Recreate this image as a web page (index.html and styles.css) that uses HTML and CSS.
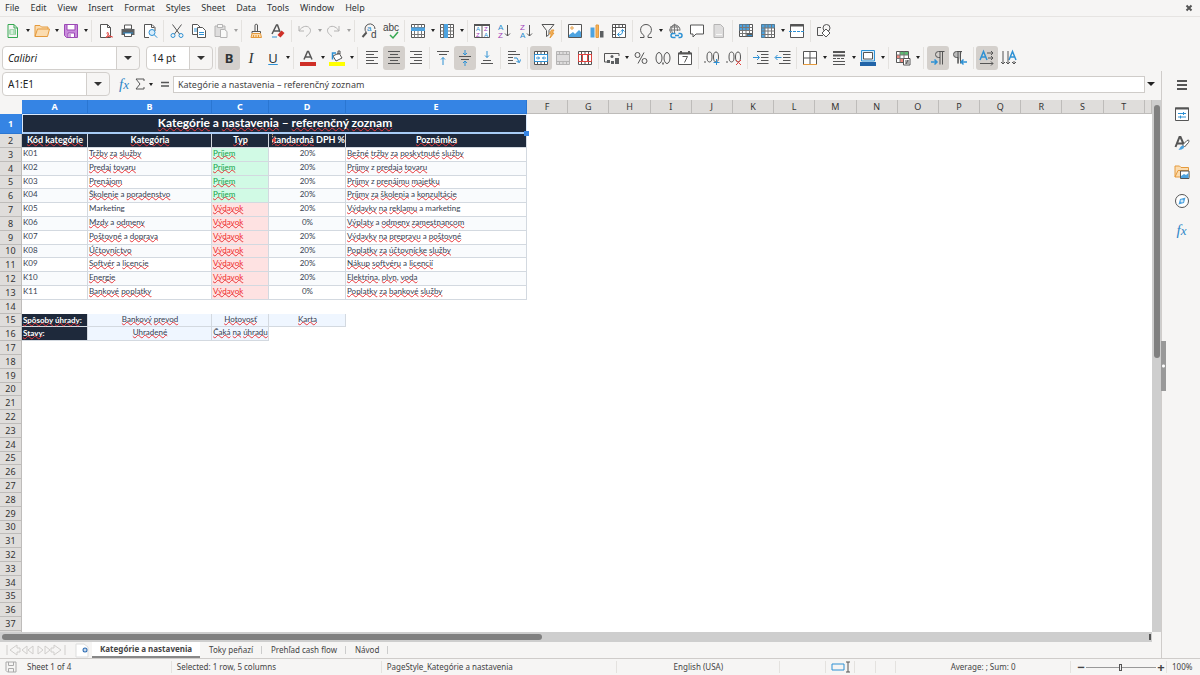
FILE: index.html
```html
<!DOCTYPE html>
<html lang="sk">
<head>
<meta charset="utf-8">
<title>Kategórie a nastavenia</title>
<link rel="stylesheet" href="styles.css">
</head>
<body>
<div class="app">
<nav class="menubar">
<button>File</button><button>Edit</button><button>View</button><button>Insert</button><button>Format</button><button>Styles</button><button>Sheet</button><button>Data</button><button>Tools</button><button>Window</button><button>Help</button>
<button class="close" aria-label="Close"><svg viewBox="0 0 8 8"><path d="M1.500 1.500l5 5M6.500 1.500l-5 5"/></svg></button>
</nav>

<div class="toolbar">
<button class="tool" aria-label="New"><svg viewBox="0 0 16 16"><path class="green" d="M3 1.500h6l3.500 3.500v9.500H3z"/><path class="green" d="M9 1.500V5h3.500"/><path class="greenfill" d="M4.500 6.500h6.500v5H4.500z"/><path class="white" d="M5 8h5.500M5 10h5.500M7 7v4"/></svg></button><button class="drop" aria-label="New menu"></button>
<button class="tool" aria-label="Open"><svg viewBox="0 0 16 16"><path class="orange tan" d="M1 13.500V2.500h5l1.500 1.500H14V6M1 13.500L3.500 6h12l-2 7.500z"/></svg></button><button class="drop" aria-label="Open menu"></button>
<button class="tool" aria-label="Save"><svg viewBox="0 0 16 16"><path class="purple purplefill" d="M1.500 1.500h13v13h-11l-2-2z"/><path class="purple whitefill" d="M4 1.500h8V7H4zM5 10h6.500v4.500H5z"/><path class="purple" d="M7 11v3"/></svg></button><button class="drop" aria-label="Save menu"></button>
<i class="sep wide"></i>
<button class="tool" aria-label="Export PDF"><svg viewBox="0 0 16 16"><path class="whitefill" d="M2.500 1.500h7l3 3v10h-10z"/><path d="M9.500 1.500v3h3"/><path class="red" d="M8 14.500c3-3 3-5 1.500-5s0 3 5 4.500c-2-1-4-1-6.500.5z"/></svg></button>
<button class="tool" aria-label="Print"><svg viewBox="0 0 16 16"><path class="whitefill" d="M4.500 2h7v4h-7z"/><path class="darkfill" d="M1.500 6h13v6h-13z"/><path class="whitefill" d="M4.500 9.500h7v4h-7z"/><path class="blue" d="M3 10h10"/></svg></button>
<button class="tool" aria-label="Print preview"><svg viewBox="0 0 16 16"><path class="whitefill" d="M13 8V4.500l-3-3H2.500v13H7"/><path d="M9.500 1.500v3h3"/><circle class="blue palefill" cx="10" cy="9.500" r="3"/><path class="blue" d="M12.200 11.700l3 3"/></svg></button>
<i class="sep"></i>
<button class="tool" aria-label="Cut"><svg viewBox="0 0 16 16"><path d="M3.500 1.500l7 9.500M12.500 1.500l-7 9.500"/><circle class="blue" cx="4" cy="12.500" r="2"/><circle class="blue" cx="12" cy="12.500" r="2"/></svg></button>
<button class="tool" aria-label="Copy"><svg viewBox="0 0 16 16"><path class="whitefill" d="M1.500 1.500h5l3 3v7h-8z"/><path class="blue" d="M3 6h5M3 8h5"/><path class="whitefill" d="M6.500 4.500h5l3 3v7h-8z"/><path class="blue" d="M8 9.500h5M8 11.500h5"/></svg></button>
<button class="tool dim" aria-label="Paste"><svg viewBox="0 0 16 16"><path class="clipfill" d="M2 3h10v10.500H2z"/><path class="whitefill" d="M4.500 1.500h5v3h-5zM7.500 6.500h4l2.500 2v6H7.500z"/></svg></button><button class="drop dim" aria-label="Paste menu"></button>
<i class="sep wide"></i>
<button class="tool" aria-label="Clone formatting"><svg viewBox="0 0 16 16"><path d="M7 8V2c0-1 2.500-1 2.500 0v6M4 8.500h8.500v2H4z"/><path class="orange tan" d="M4 10.500h8.500l1 4H3z"/><path class="orange" d="M5.500 14v-2M8 14v-2M10.500 14v-2"/></svg></button>
<button class="tool" aria-label="Clear formatting"><svg viewBox="0 0 16 16"><path class="bold" d="M2 11L6.500 2h1L10 9M3.500 8H9"/><path class="blue" d="M2 14h5"/><path class="redfill" d="M7.500 12l4-4.500 3 2.500-4 4.500z"/></svg></button>
<i class="sep"></i>
<button class="tool dim" aria-label="Undo"><svg viewBox="0 0 16 16"><path d="M2 3v5h5M2 8c3-5 8-6 10.500-3s0 6-3.500 8.500"/></svg></button><button class="drop dim" aria-label="Undo menu"></button>
<button class="tool dim" aria-label="Redo"><svg viewBox="0 0 16 16"><path d="M13 3v5H8M13 8C10 3 5 2 2.500 5s0 6 3.500 8.500"/></svg></button><button class="drop dim" aria-label="Redo menu"></button>
<i class="sep wide"></i>
<button class="tool" aria-label="Find and replace"><svg viewBox="0 0 16 16"><path d="M5.500 9.500A5 5 0 1 1 14 6"/><path class="heavy" d="M5.500 9.500L1.500 14"/><text class="tb" x="6" y="8" font-size="8">a</text><text x="10" y="15" font-size="10">d</text></svg></button>
<button class="tool" aria-label="Spelling"><svg viewBox="0 0 16 16"><text x="0" y="8" font-size="10">abc</text><path class="green bold" d="M7 12l3 3 5-6"/></svg></button>
<i class="sep"></i>
<button class="tool" aria-label="Row"><svg viewBox="0 0 16 16"><path class="whitefill" d="M1.500 1.500h13v13h-13z"/><path class="thin" d="M1.500 4.500h13M1.500 11.500h13M4.500 1.500v13M8 1.500v13M11.500 1.500v13"/><path class="bluefill" d="M1 4.500h14V8H1z"/></svg></button><button class="drop" aria-label="Row menu"></button>
<button class="tool" aria-label="Column"><svg viewBox="0 0 16 16"><path class="whitefill" d="M1.500 1.500h13v13h-13z"/><path class="thin" d="M1.500 4.500h13M1.500 8h13M1.500 11.500h13M4.500 1.500v13M11.500 1.500v13"/><path class="bluefill" d="M5 1h4v14H5z"/></svg></button><button class="drop" aria-label="Column menu"></button>
<i class="sep wide"></i>
<button class="tool" aria-label="Sort"><svg viewBox="0 0 16 16"><path class="whitefill" d="M.5 1.500h15v13H.5z"/><path class="heavy" d="M0 2h16"/><path d="M8 2v12.500"/><text class="tb" x="2" y="8" font-size="6">A</text><text class="tp" x="2" y="14" font-size="6">Z</text><text class="tp" x="10" y="8" font-size="6">Z</text><text class="tb" x="10" y="14" font-size="6">A</text></svg></button>
<button class="tool" aria-label="Sort ascending"><svg viewBox="0 0 16 16"><text class="tb" x="2" y="7" font-size="8">A</text><text class="tp" x="2" y="15" font-size="8">Z</text><path d="M11.500 2v11M9 10.500l2.500 2.500 2.500-2.500"/></svg></button>
<button class="tool" aria-label="Sort descending"><svg viewBox="0 0 16 16"><text class="tp" x="2" y="7" font-size="8">Z</text><text class="tb" x="2" y="15" font-size="8">A</text><path d="M11.500 2v11M9 10.500l2.500 2.500 2.500-2.500"/></svg></button>
<button class="tool" aria-label="AutoFilter"><svg viewBox="0 0 16 16"><path d="M2 1.500h12l-5 6v4l-2.500 2v-6z"/><path class="orange orangefill" d="M11.500 7l-2 4h2l-1.500 4 4-5h-2l2-3z"/></svg></button>
<i class="sep"></i>
<button class="tool" aria-label="Image"><svg viewBox="0 0 16 16"><path class="whitefill" d="M1.500 1.500h13v13h-13z"/><path class="bluefill" d="M2 14v-2l4-3 2 2 4-4 2 2v5z"/><circle class="orange" cx="5" cy="5" r="1.200"/></svg></button>
<button class="tool" aria-label="Chart"><svg viewBox="0 0 16 16"><path class="bluefill" d="M1.500 4.500h4v10h-4z"/><path class="orange orangefill" d="M7 2h2.500v12.500H7z"/><path class="darkfill" d="M11 8h3.500v6.500H11z"/></svg></button>
<button class="tool" aria-label="Pivot table"><svg viewBox="0 0 16 16"><path class="whitefill" d="M1.500 1.500h13v13h-13z"/><path d="M1.500 4.500h13M4.500 1.500v13M8 1.500v3M11.500 1.500v3M1.500 8h3M1.500 11.500h3"/><path class="blue" d="M6.500 11.500c4 1 5.500-1 5-5M10 8.500l1.500-2 2 2M8.500 9.500l-2 2 2 2"/></svg></button>
<i class="sep"></i>
<button class="tool" aria-label="Special character"><svg viewBox="0 0 16 16"><path d="M2 14.500h4v-2C.5 9 2 1.500 8 1.500s7.500 7.500 2 11v2h4"/></svg></button><button class="drop" aria-label="Special character menu"></button>
<button class="tool" aria-label="Hyperlink"><svg viewBox="0 0 16 16"><path class="thin" d="M5 11A5 5 0 1 1 13 7.500M3 4h9M2 7h11M7.500 1v9M7.500 1C4 4 4 7 5.500 10M7.500 1c3 3 3 4 3 7"/><path class="blue bold" d="M8.500 10.500H6a2 2 0 0 0 0 4h2.500M11.500 10.500H13a2 2 0 0 1 0 4h-1.500M8 12.500h4"/></svg></button>
<button class="tool" aria-label="Comment"><svg viewBox="0 0 16 16"><path class="whitefill" d="M1.500 2h13v9H7l-3 3v-3H1.500z"/></svg></button>
<button class="tool dim" aria-label="Headers and footers"><svg viewBox="0 0 16 16"><path class="clipfill" d="M3 1.500h6.500l3 3v10H3z"/><path class="white" d="M5 11.500h6"/></svg></button>
<i class="sep"></i>
<button class="tool" aria-label="Print area"><svg viewBox="0 0 16 16"><path class="whitefill" d="M1.500 1.500h13v12h-13z"/><path class="bluefill" d="M1.500 1.500h9.500v6H1.500z"/><path class="thin" d="M1.500 4.500h13M1.500 7.500h13M1.500 10.500h13M4.500 1.500v12M8 1.500v12M11.500 1.500v12"/><path class="darkfill" d="M8.500 10h6.500v4H8.500z"/><path class="blue" d="M9.500 12.500H14"/></svg></button>
<button class="tool" aria-label="Freeze"><svg viewBox="0 0 16 16"><path class="whitefill" d="M1.500 1.500h13v13h-13z"/><path class="bluefill" d="M1.500 1.500h13V5H5v9.500H1.500z"/><path class="thin" d="M1.500 5h13M1.500 8h13M1.500 11.500h13M5 1.500v13M8 1.500v13M11.500 1.500v13"/></svg></button><button class="drop" aria-label="Freeze menu"></button>
<button class="tool" aria-label="Split window"><svg viewBox="0 0 16 16"><path class="whitefill" d="M1.500 1.500h13v13h-13z"/><path class="heavy" d="M1 2.500h14"/><path class="blue dash" d="M0 8.500h16"/></svg></button>
<i class="sep"></i>
<button class="tool" aria-label="Draw functions"><svg viewBox="0 0 16 16"><path d="M5 4.500H1.500v8H7"/><circle cx="10.500" cy="5" r="3.500"/><path class="whitefill" d="M10 6l4 4-4 4-4-4z"/></svg></button>
</div>

<div class="toolbar">
<label class="combo font"><select aria-label="Font name"><option>Calibri</option></select></label>
<label class="combo size"><select aria-label="Font size"><option>14 pt</option></select></label>
<i class="sep"></i>
<button class="tool on glyph strong" aria-label="Bold">B</button>
<button class="tool glyph slant" aria-label="Italic">I</button>
<button class="tool glyph under" aria-label="Underline">U</button><button class="drop" aria-label="Underline menu"></button>
<i class="sep wide"></i>
<button class="tool" aria-label="Font color"><svg viewBox="0 0 16 16"><path class="bold" d="M4 9.500l3.500-8h1l3.500 8M5.500 7h5"/><path class="redfill" d="M0 12h16v4H0z"/></svg></button><button class="drop" aria-label="Font color menu"></button>
<button class="tool" aria-label="Highlighting color"><svg viewBox="0 0 16 16"><path class="whitefill" d="M4 6l6-3 3 5-6 3z"/><path d="M9 5V1h2v3"/><path class="blue bold" d="M3.500 9.500V3H7"/><path class="yellowfill" d="M0 12h16v4H0z"/></svg></button><button class="drop" aria-label="Highlighting color menu"></button>
<i class="sep wide"></i>
<button class="tool" aria-label="Align left"><svg viewBox="0 0 16 16"><path d="M2 1.500h12M2 4.500h8M2 7.500h12M2 10.500h8M2 13.500h12"/></svg></button>
<button class="tool on" aria-label="Align center"><svg viewBox="0 0 16 16"><path d="M2 1.500h12M4 4.500h8M2 7.500h12M4 10.500h8M2 13.500h12"/></svg></button>
<button class="tool" aria-label="Align right"><svg viewBox="0 0 16 16"><path d="M2 1.500h12M6 4.500h8M2 7.500h12M6 10.500h8M2 13.500h12"/></svg></button>
<i class="sep"></i>
<button class="tool" aria-label="Align top"><svg viewBox="0 0 16 16"><path d="M2 1.500h12M4 4.500h8"/><path class="blue" d="M8 15V7.500M6 9.500l2-2 2 2"/></svg></button>
<button class="tool on" aria-label="Center vertically"><svg viewBox="0 0 16 16"><path d="M2 6.500h12M4 9.500h8"/><path class="blue" d="M8 0v5M6 3l2 2 2-2M8 16v-5M6 13l2-2 2 2"/></svg></button>
<button class="tool" aria-label="Align bottom"><svg viewBox="0 0 16 16"><path d="M4 10.500h8M2 13.500h12"/><path class="blue" d="M8 1v6.500M6 5.500l2 2 2-2"/></svg></button>
<i class="sep"></i>
<button class="tool" aria-label="Wrap text"><svg viewBox="0 0 16 16"><path d="M2 1.500h8M2 4.500h12M2 7.500h5M2 10.500h5M2 13.500h8"/><path class="blue" d="M8 8h3l2 4M10.500 11.500l3 1 1-3"/></svg></button>
<i class="sep"></i>
<button class="tool on" aria-label="Merge and center"><svg viewBox="0 0 16 16"><path class="whitefill" d="M1.500 1.500h13v13h-13z"/><path d="M1.500 4.500h13M1.500 11.500h13M4.500 1.500v3M8 1.500v3M11.500 1.500v3M4.500 11.500v3M8 11.500v3M11.500 11.500v3"/><path class="blue" d="M1.500 4.500h13v7h-13zM3 8h3.500M9.500 8H13M5 6.500L6.500 8 5 9.500M11 6.500L9.500 8 11 9.500"/></svg></button>
<button class="tool dim" aria-label="Merge cells"><svg viewBox="0 0 16 16"><path class="clipfill" d="M1.500 1.500h13v13h-13z"/><path d="M1.500 4.500h13M1.500 11.500h13M4.500 1.500v3M8 1.500v3M11.500 1.500v3M4.500 11.500v3M8 11.500v3M11.500 11.500v3"/></svg></button>
<button class="tool" aria-label="Unmerge cells"><svg viewBox="0 0 16 16"><path class="whitefill" d="M1.500 1.500h13v13h-13z"/><path d="M4.500 1.500v13M8 1.500v3M8 11.500v3M11.500 1.500v13"/><path class="red" d="M1.500 4.500h13v7h-13zM5.500 5v6M10.500 5v6"/></svg></button>
<i class="sep"></i>
<button class="tool" aria-label="Currency"><svg viewBox="0 0 16 16"><path d="M15 6V3.500H.500V12H6"/><circle class="darkfill" cx="8" cy="6.500" r="1.500"/><path class="darkfill" d="M3 10h3v3H3zM7 11h3v3H7zM11 8h4v6h-4z"/></svg></button><button class="drop" aria-label="Currency menu"></button>
<button class="tool" aria-label="Percent"><svg viewBox="0 0 16 16"><circle cx="4.500" cy="5" r="2.500"/><circle cx="11.500" cy="11" r="2.500"/><path d="M11 2.500l-6 11"/></svg></button>
<button class="tool" aria-label="Number"><svg viewBox="0 0 16 16"><ellipse cx="4" cy="8" rx="3" ry="5.500"/><ellipse cx="12" cy="8" rx="3" ry="5.500"/><path class="bold" d="M8 12.500v2"/></svg></button>
<button class="tool" aria-label="Date"><svg viewBox="0 0 16 16"><path class="whitefill" d="M1.500 3h13v11.500h-13z"/><path class="heavy" d="M1.500 3.500h13M4 1v2M12 1v2"/><path d="M5.500 6.500h5l-3 6"/></svg></button>
<i class="sep"></i>
<button class="tool" aria-label="Add decimal place"><svg viewBox="0 0 16 16"><ellipse cx="5.500" cy="7" rx="2.500" ry="5"/><ellipse cx="12" cy="7" rx="2.500" ry="5"/><path d="M1 11v2"/><path class="blue" d="M12.500 9v6M9.500 12.500h6"/></svg></button>
<button class="tool" aria-label="Delete decimal place"><svg viewBox="0 0 16 16"><ellipse cx="5.500" cy="7" rx="2.500" ry="5"/><ellipse cx="12" cy="7" rx="2.500" ry="5"/><path d="M1 11v2"/><path class="red" d="M10 10l5 5M15 10l-5 5"/></svg></button>
<i class="sep"></i>
<button class="tool" aria-label="Increase indent"><svg viewBox="0 0 16 16"><path d="M4 1.500h11.500M8 4.500h7.500M8 7.500h7.500M8 10.500h7.500M4 13.500h11.500"/><path class="blue" d="M0 7.500h6M4 5l2.500 2.500L4 10"/></svg></button>
<button class="tool" aria-label="Decrease indent"><svg viewBox="0 0 16 16"><path d="M4 1.500h11.500M8 4.500h7.500M8 7.500h7.500M8 10.500h7.500M4 13.500h11.500"/><path class="blue" d="M6.500 7.500h-6M2.500 5L0 7.500 2.500 10"/></svg></button>
<i class="sep"></i>
<button class="tool" aria-label="Borders"><svg viewBox="0 0 16 16"><path class="whitefill" d="M1.500 1.500h13v13h-13z"/><path d="M8 1.500v13M1.500 8h13"/><path class="orange" d="M1 14.500h14"/></svg></button><button class="drop" aria-label="Borders menu"></button>
<button class="tool" aria-label="Border style"><svg viewBox="0 0 16 16"><path class="heavy" d="M2 2h12M2 5.500h12"/><path class="dash" d="M2 8.500h12"/><path d="M2 11.500h12M2 14.500h12"/></svg></button><button class="drop" aria-label="Border style menu"></button>
<button class="tool" aria-label="Border color"><svg viewBox="0 0 16 16"><path class="blue palefill" d="M1.500.5h13v10.500h-13z"/><path class="whitefill" d="M3.500 2.500h9v6.500h-9z"/><path class="navyfill" d="M0 12h16v4H0z"/></svg></button><button class="drop" aria-label="Border color menu"></button>
<i class="sep wide"></i>
<button class="tool" aria-label="Conditional"><svg viewBox="0 0 16 16"><path class="whitefill" d="M1.500 1.500h12v11h-12z"/><path class="greenfill" d="M5 2h8v3H5z"/><path class="palered" d="M2 5h3v3H2zM5 8h4v4H5z"/><path class="thin" d="M1.500 5h12M1.500 8.500h12M5 1.500v11M9 1.500v11"/><path class="whitefill" d="M8.500 8.500h6.500v6.500H8.500z"/><path d="M10 11h4M10 13h4M13 10l-2 4"/></svg></button><button class="drop" aria-label="Conditional menu"></button>
<i class="sep wide"></i>
<button class="tool on" aria-label="Left to right"><svg viewBox="0 0 16 16"><path d="M14.500 1.500H8.500a3 3 0 0 0 0 6h1.500M10 1.500v13M12.500 1.500v13"/><path class="blue bold" d="M1 12h5.500M4.500 9.500L7 12l-2.500 2.500"/></svg></button>
<button class="tool" aria-label="Right to left"><svg viewBox="0 0 16 16"><path class="clipfill" d="M10 1.500H4.500a3 3 0 0 0 0 6H6v6M6 1.500v12M8.500 1.500v12"/><path class="blue bold" d="M9.500 12H15M11.500 9.500L9 12l2.500 2.500"/></svg></button>
<i class="sep"></i>
<button class="tool on" aria-label="Horizontal text"><svg viewBox="0 0 16 16"><path class="blue bold" d="M1 10L4.500 1.500 8 10M2.500 7H7"/><path d="M8 3h6M12 1l2 2-2 2M9 8h5M12 6l2 2-2 2M1 13.500h13M12 11.500l2 2-2 2"/></svg></button>
<button class="tool" aria-label="Vertical text"><svg viewBox="0 0 16 16"><path class="blue bold" d="M8 10l3.500-8.500L15 10M9.500 7H14"/><path d="M2 1v13M0 12l2 2 2-2M7 1v13M5 12l2 2 2-2M13 11v3M11 12l2 2 2-2"/></svg></button>
</div>

<div class="body">
<main class="work">
<div class="formulabar">
<div class="combo name"><input aria-label="Name box" value="A1:E1"></div>
<button class="fx" aria-label="Function wizard">f<small>x</small></button>
<button class="sum" aria-label="Select function"><svg viewBox="0 0 10 12"><path d="M9 3V1H1l4 5-4 5h8V9"/></svg></button><button class="drop" aria-label="Function menu"></button>
<button class="equals" aria-label="Formula"><svg viewBox="0 0 10 12"><path class="bold" d="M1 4.500h8M1 8h8"/></svg></button>
<input class="formula" aria-label="Input line" value="Kategórie a nastavenia – referenčný zoznam">
<button class="expand" aria-label="Expand formula bar"></button>
</div>

<div class="gridarea">
<div class="sheet">
<table>
<colgroup><col class="c-num"><col class="c-a"><col class="c-b"><col class="c-c"><col class="c-d"><col class="c-e"><col span="15"><col class="c-last"></colgroup>
<thead><tr><th></th><th class="sel">A</th><th class="sel">B</th><th class="sel">C</th><th class="sel">D</th><th class="sel">E</th><th>F</th><th>G</th><th>H</th><th>I</th><th>J</th><th>K</th><th>L</th><th>M</th><th>N</th><th>O</th><th>P</th><th>Q</th><th>R</th><th>S</th><th>T</th><th></th></tr></thead>
<tbody>
<tr class="title"><th class="sel">1</th><td colspan="5"><u>Kategórie</u> a <u>nastavenia</u> – <u>referenčný</u> <u>zoznam</u><b class="handle"></b></td></tr>
<tr class="head"><th>2</th><td><u>Kód</u> <u>kategórie</u></td><td><u>Kategória</u></td><td><u>Typ</u></td><td><div class="clip"><span><u>Štandardná</u> DPH %</span></div></td><td><u>Poznámka</u></td></tr>
<tr><th>3</th><td>K01</td><td><u>Tržby</u> <u>za</u> <u>služby</u></td><td class="in"><u>Príjem</u></td><td class="mid">20%</td><td><u>Bežné</u> <u>tržby</u> <u>za</u> <u>poskytnuté</u> <u>služby</u></td></tr>
<tr class="alt"><th>4</th><td>K02</td><td><u>Predaj</u> <u>tovaru</u></td><td class="in"><u>Príjem</u></td><td class="mid">20%</td><td><u>Príjmy</u> z <u>predaja</u> <u>tovaru</u></td></tr>
<tr><th>5</th><td>K03</td><td><u>Prenájom</u></td><td class="in"><u>Príjem</u></td><td class="mid">20%</td><td><u>Príjmy</u> z <u>prenájmu</u> <u>majetku</u></td></tr>
<tr class="alt"><th>6</th><td>K04</td><td><u>Školenie</u> a <u>poradenstvo</u></td><td class="in"><u>Príjem</u></td><td class="mid">20%</td><td><u>Príjmy</u> <u>za</u> <u>školenia</u> a <u>konzultácie</u></td></tr>
<tr><th>7</th><td>K05</td><td>Marketing</td><td class="out"><u>Výdavok</u></td><td class="mid">20%</td><td><u>Výdavky</u> <u>na</u> <u>reklamu</u> a marketing</td></tr>
<tr class="alt"><th>8</th><td>K06</td><td><u>Mzdy</u> a <u>odmeny</u></td><td class="out"><u>Výdavok</u></td><td class="mid">0%</td><td><u>Výplaty</u> a <u>odmeny</u> <u>zamestnancom</u></td></tr>
<tr><th>9</th><td>K07</td><td><u>Poštovné</u> a <u>doprava</u></td><td class="out"><u>Výdavok</u></td><td class="mid">20%</td><td><u>Výdavky</u> <u>na</u> <u>prepravu</u> a <u>poštovné</u></td></tr>
<tr class="alt"><th>10</th><td>K08</td><td><u>Účtovníctvo</u></td><td class="out"><u>Výdavok</u></td><td class="mid">20%</td><td><u>Poplatky</u> <u>za</u> <u>účtovnícke</u> <u>služby</u></td></tr>
<tr><th>11</th><td>K09</td><td><u>Softvér</u> a <u>licencie</u></td><td class="out"><u>Výdavok</u></td><td class="mid">20%</td><td><u>Nákup</u> <u>softvéru</u> a <u>licencií</u></td></tr>
<tr class="alt"><th>12</th><td>K10</td><td><u>Energie</u></td><td class="out"><u>Výdavok</u></td><td class="mid">20%</td><td><u>Elektrina</u>, <u>plyn</u>, <u>voda</u></td></tr>
<tr><th>13</th><td>K11</td><td><u>Bankové</u> <u>poplatky</u></td><td class="out"><u>Výdavok</u></td><td class="mid">0%</td><td><u>Poplatky</u> <u>za</u> <u>bankové</u> <u>služby</u></td></tr>
<tr><th>14</th></tr>
<tr class="opts"><th>15</th><td class="key"><u>Spôsoby</u> <u>úhrady</u>:</td><td><u>Bankový</u> <u>prevod</u></td><td><u>Hotovosť</u></td><td><u>Karta</u></td></tr>
<tr class="opts"><th>16</th><td class="key"><u>Stavy</u>:</td><td><u>Uhradené</u></td><td><u>Čaká</u> <u>na</u> <u>úhradu</u></td></tr>
<tr><th>17</th></tr><tr><th>18</th></tr><tr><th>19</th></tr><tr><th>20</th></tr><tr><th>21</th></tr><tr><th>22</th></tr><tr><th>23</th></tr><tr><th>24</th></tr><tr><th>25</th></tr><tr><th>26</th></tr><tr><th>27</th></tr><tr><th>28</th></tr><tr><th>29</th></tr><tr><th>30</th></tr><tr><th>31</th></tr><tr><th>32</th></tr><tr><th>33</th></tr><tr><th>34</th></tr><tr><th>35</th></tr><tr><th>36</th></tr><tr><th>37</th></tr><tr><th></th></tr>
</tbody>
</table>
</div>
<div class="vscroll"><div class="thumb"></div></div>
</div>
<div class="hscroll"><div class="thumb"></div><i></i></div>

<div class="tabs">
<button class="nav" aria-label="Sheet navigation"><svg viewBox="0 0 62 12"><path d="M2 1v10M12 1L5 6l7 5V8h3V4h-3zM22 2l-5 4 5 4zM28 2l-5 4 5 4zM33 2l5 4-5 4zM40 2l5 4-5 4zM49 1l7 5-7 5V8h-3V4h3zM60 1v10"/></svg></button>
<button class="add" aria-label="Add sheet"><svg viewBox="0 0 14 14"><path class="page" d="M1 1h8l4 3v10H1z"/><circle cx="10" cy="7" r="2.500"/><path class="plus" d="M8.500 7h3M10 5.500v3"/></svg></button>
<button class="tab active">Kategórie a nastavenia</button><button class="tab">Toky peňazí</button><button class="tab">Prehľad cash flow</button><button class="tab">Návod</button>
</div>
</main>

<aside class="sidebar">
<div class="grip"></div>
<button aria-label="Sidebar settings"><svg viewBox="0 0 16 16"><path class="heavy" d="M3 4h10M3 8h10M3 12h10"/></svg></button>
<button aria-label="Properties"><svg viewBox="0 0 16 16"><path class="whitefill" d="M1.500 2h13v12.500h-13z"/><path class="heavy" d="M1 2.500h14"/><path class="blue" d="M4 7.500h8M4 11h8M9.500 6v3M6.500 9.500v3"/></svg></button>
<button aria-label="Styles"><svg viewBox="0 0 16 16"><path class="heavy" d="M1.500 12L5.500 2h1L10 10M3 8.500h6"/><path class="whitefill" d="M8.500 10L13 5.500c2-1 2.500 0 1.500 2L10.500 12z"/><path class="blue bluefill" d="M4 15c2-.5 2-4.500 5-4.500 2.500 1 1 4.500-5 4.500z"/></svg></button>
<button aria-label="Gallery"><svg viewBox="0 0 16 16"><path class="orange tan" d="M1 13V2h4.500L7 3.500h7.500v3L15 13z"/><path class="orange" d="M1 13L4 6.500h11"/><path class="whitefill" d="M6.500 7h8.500v7.500H6.500z"/><path class="bluefill" d="M7 14v-2l3-2 2 1 2.500-2v5z"/></svg></button>
<button aria-label="Navigator"><svg viewBox="0 0 16 16"><circle class="whitefill" cx="8" cy="8" r="6.500"/><path class="blue bluefill" d="M11.500 4.500L10 10l-5.500 1.500L6 6z"/><circle class="white" cx="8" cy="8" r="1"/></svg></button>
<button class="fx" aria-label="Functions">f<small>x</small></button>
</aside>
</div>

<footer class="status">
<span class="doc"><svg viewBox="0 0 12 12"><path d="M1 1h10v10H2.500L1 9.500zM3.500 1v3.500h5V1M3.500 11V7.500h5V11"/></svg></span>
<span>Sheet 1 of 4</span>
<span>Selected: 1 row, 5 columns</span>
<span>PageStyle_Kategórie a nastavenia</span>
<span class="center">English (USA)</span>
<span></span>
<span class="mode"><svg viewBox="0 0 20 12"><path class="blue" d="M1 3h12v6H1z"/><path d="M15 1h4M15 11h4M17 1v10"/></svg></span>
<span></span><span></span>
<span class="center">Average: ; Sum: 0</span>
<span class="zoom"><button aria-label="Zoom out">−</button><input type="range" aria-label="Zoom" min="0" max="100" value="49"><button aria-label="Zoom in">+</button></span>
<span class="pct">100%</span>
</footer>
</div>
</body>
</html>
```
FILE: styles.css
```css
* { box-sizing: border-box; }
body { margin: 0; background: #f6f5f4; color: #2e3436; font: 9px/12px "Noto Sans", sans-serif; }
button, input, select { margin: 0; padding: 0; border: 0; background: none; color: inherit; font: inherit; outline: 0; }
.app { display: flex; flex-direction: column; height: 100vh; overflow: hidden; }

.menubar { display: flex; flex: none; height: 17px; padding: 0 5px; gap: 11px; border-bottom: 1px solid #e6e4e2; }
.menubar .close { margin-left: auto; width: 12px; }
.close svg { display: block; width: 8px; height: 8px; margin: auto; stroke-width: 2; }

svg { overflow: visible; fill: none; stroke: #555; stroke-width: 1; }
svg text { fill: #444; stroke: none; font-family: "Liberation Sans", sans-serif; }
svg .tb { fill: #1e8bcd; }
svg .tp { fill: #a040b8; }
.blue { stroke: #2e91d4; }
.green { stroke: #36a852; }
.orange { stroke: #e59a3c; }
.purple { stroke: #9b49b5; }
.red { stroke: #e0433f; }
.white { stroke: #fff; }
.thin { stroke: #777; }
.bold { stroke-width: 1.5; }
.heavy { stroke-width: 2; }
.dash { stroke-dasharray: 3 1; }
.whitefill { fill: #fff; }
.clipfill { fill: #bbb; }
.darkfill { fill: #5c5f61; stroke: none; }
.palefill { fill: #d8edfb; }
.tan { fill: #fbdcb0; }
.purplefill { fill: #c98bdc; }
.bluefill { fill: #4da3e0; stroke: none; }
.greenfill { fill: #5bbd72; stroke: none; }
.redfill { fill: #cf2f27; stroke: none; }
.palered { fill: #ef8a80; stroke: none; }
.orangefill { fill: #f5b35c; }
.yellowfill { fill: #ffff00; stroke: none; }
.navyfill { fill: #2264a8; stroke: none; }

.toolbar { display: flex; flex: none; align-items: center; height: 27px; padding: 0 2px; }
.tool { flex: none; width: 22px; height: 24px; border-radius: 3px; }
.tool svg { display: block; width: 16px; height: 16px; margin: auto; }
.tool.on { background: #d4d0cc; }
.dim { opacity: .4; }
.drop { flex: none; width: 7px; height: 24px; }
.drop::before, .expand::before { content: ""; display: block; width: 0; margin: auto; border: 2px solid transparent; border-top: 3px solid #222; border-bottom: 0; }
.sep { flex: none; width: 1px; height: 22px; margin: 0 2px; background: #e4e2df; }
.sep.wide { margin-right: 3px; }
.glyph { font-size: 13px; line-height: 20px; }
.strong { font-weight: bold; }
.slant { font-family: "Liberation Serif", serif; font-style: italic; font-size: 15px; }
.under { text-decoration: underline; text-decoration-color: #2e91d4; }

.combo { position: relative; display: flex; flex: none; height: 24px; border: 1px solid #d2cfcc; border-radius: 4px; background: linear-gradient(to left, #f6f5f4 22px, #d2cfcc 22px, #d2cfcc 23px, #fff 23px); color: #222; font-size: 10px; }
.combo select, .combo input { flex: 1; min-width: 0; padding-left: 5px; appearance: none; }
.combo::after { content: ""; position: absolute; right: 7px; top: 9px; border: 4px solid transparent; border-top-color: #333; border-bottom: 0; pointer-events: none; }
.font { width: 138px; margin: 0 6px 0 0; }
.font select { font-style: italic; }
.size { width: 67px; }

.body { display: flex; flex: 1; min-height: 0; }
.work { display: flex; flex: 1; flex-direction: column; min-width: 0; }
.formulabar { display: flex; flex: none; align-items: center; height: 29px; padding: 0 4px 3px 2px; }
.name { width: 108px; margin-right: 6px; }
.fx { width: 16px; color: #2e86c8; font: italic 15px/16px "Liberation Serif", serif; }
.fx small { font-size: 13px; }
.sum, .equals { width: 15px; height: 14px; }
.sum svg, .equals svg { display: block; width: 10px; height: 12px; margin: auto; }
.equals { margin: 0 1px 0 3px; }
.formula { flex: 1; min-width: 0; height: 17px; padding: 0 4px; border: 1px solid #cfccc9; background: #fff; color: #444; }
.expand { width: 12px; height: 16px; }
.expand::before { border-width: 4px 4px 0; }

.gridarea { display: flex; flex: 1; min-height: 0; background: #fff; }
.sheet { flex: 1; min-width: 0; overflow: hidden; }
table { width: 100%; table-layout: fixed; border-collapse: separate; border-spacing: 0; }
.c-num { width: 22px; } .c-a { width: 66px; } .c-b { width: 124px; } .c-c { width: 57px; } .c-d { width: 77px; } .c-e { width: 181px; } .c-last { width: 7px; }
th { height: 14px; padding: 0; background: #dfdddb; border: solid #bebcba; border-width: 0 1px 1px 0; color: #333; font-weight: normal; line-height: 12px; }
th.sel { background: #3584e4; border-color: #2a76d2; color: #fff; font-weight: bold; }
thead th:first-child { background: #f6f5f4; border-color: #f6f5f4; }
tbody tr:nth-child(5n) th { height: 13px; }
td { padding: 0 0 0 1px; border: solid #d3d9e0; border-width: 0 1px 1px 0; color: #374151; font: 8px/11px Lato, sans-serif; white-space: nowrap; vertical-align: top; }
td u { text-decoration: underline wavy #e8383b 1px; text-underline-offset: -1px; text-decoration-skip-ink: none; }
.alt td { background: #f9fbfd; }
tr .in { background: #d1fae5; color: #16a34a; }
tr .out { background: #fee2e2; color: #ef2b2b; }
.mid, .opts td { text-align: center; }
.opts td { background: #eff6ff; }
.title th { height: 20px; }
.title td { position: relative; background: #1e293b; border: 1px solid #dbe9fb; border-bottom: 2px solid #a9cdf6; color: #fff; text-align: center; font-size: 12px; font-weight: bold; line-height: 16px; }
.title u { text-underline-offset: 0; }
.handle { position: absolute; right: -3px; bottom: -4px; width: 5px; height: 5px; background: #3584e4; }
.head td, .opts .key { background: #1e293b; color: #fff; text-align: center; font-weight: bold; line-height: 12px; }
.head td { font-size: 9px; }
.opts .key { text-align: left; }
.clip { position: relative; display: flex; justify-content: flex-end; overflow: hidden; margin: 0 0 0 2px; }
.clip::before { content: ""; position: absolute; left: 0; top: 3px; border: 3px solid transparent; border-right-color: #f0453f; border-left: 0; }
.vscroll { flex: none; width: 9px; padding: 5px 1px 0 2px; background: #cecece; }
.vscroll .thumb { height: 48%; border-radius: 3px; background: #808080; }
.hscroll { display: flex; flex: none; align-items: center; justify-content: space-between; height: 10px; margin-right: 9px; padding: 0 1px 0 2px; background: #cecece; }
.hscroll .thumb { width: 47%; height: 6px; border-radius: 3px; background: #808080; }
.hscroll i { width: 2px; height: 6px; background: #555; }

.tabs { display: flex; flex: none; height: 16px; color: #444; }
.nav { width: 62px; margin: 0 8px 0 5px; }
.nav svg { display: block; width: 62px; height: 12px; stroke: #d0cecc; }
.add { width: 17px; }
.add svg { display: block; width: 14px; height: 14px; fill: #2e6db4; stroke: none; }
.add .page { fill: #fff; stroke: #ddd; }
.add .plus { stroke: #fff; }
.tab { position: relative; padding: 0 9px; font-size: 8px; }
.tab:not(.active)::after { content: ""; position: absolute; right: 0; top: 4px; height: 8px; border-right: 1px solid #ccc; }
.tab.active { padding: 0 8px; background: #fff; border-bottom: 2px solid #888; font-weight: bold; }

.sidebar { position: relative; display: flex; flex: none; flex-direction: column; gap: 13px; align-items: center; width: 39px; padding: 6px 0 0 1px; border-left: 1px solid #cfccca; }
.sidebar button { height: 16px; }
.sidebar svg { display: block; width: 16px; height: 16px; }
.grip { position: absolute; left: -1px; top: 46%; width: 5px; height: 50px; background: radial-gradient(circle, #fff 1px, #999 2px); }

.status { display: grid; flex: none; grid-template-columns: 24px 148fr 210fr 236fr 163fr 46fr 29fr 21fr 20fr 175fr 96px 33px; align-items: center; height: 17px; border-top: 1px solid #cfccca; color: #444; font-size: 8px; }
.status > span { height: 12px; padding-left: 5px; border-right: 1px solid #e4e2df; white-space: nowrap; }
.status > span:first-child, .status > span:last-child { border: 0; }
.status > span:nth-child(2) { padding-left: 3px; }
.status .center { padding: 0; text-align: center; }
.doc svg { display: block; width: 12px; height: 12px; stroke: #aaa; }
.mode svg { display: block; width: 20px; height: 12px; }
.zoom { display: flex; align-items: center; }
.zoom button { width: 10px; font-size: 13px; font-weight: bold; line-height: 10px; }
.zoom input { flex: 1; min-width: 0; height: 10px; appearance: none; background: linear-gradient(#999, #999) center / 100% 1px no-repeat; }
.zoom input::-webkit-slider-thumb { appearance: none; width: 3px; height: 7px; border: 1px solid #555; background: #eee; }
```
